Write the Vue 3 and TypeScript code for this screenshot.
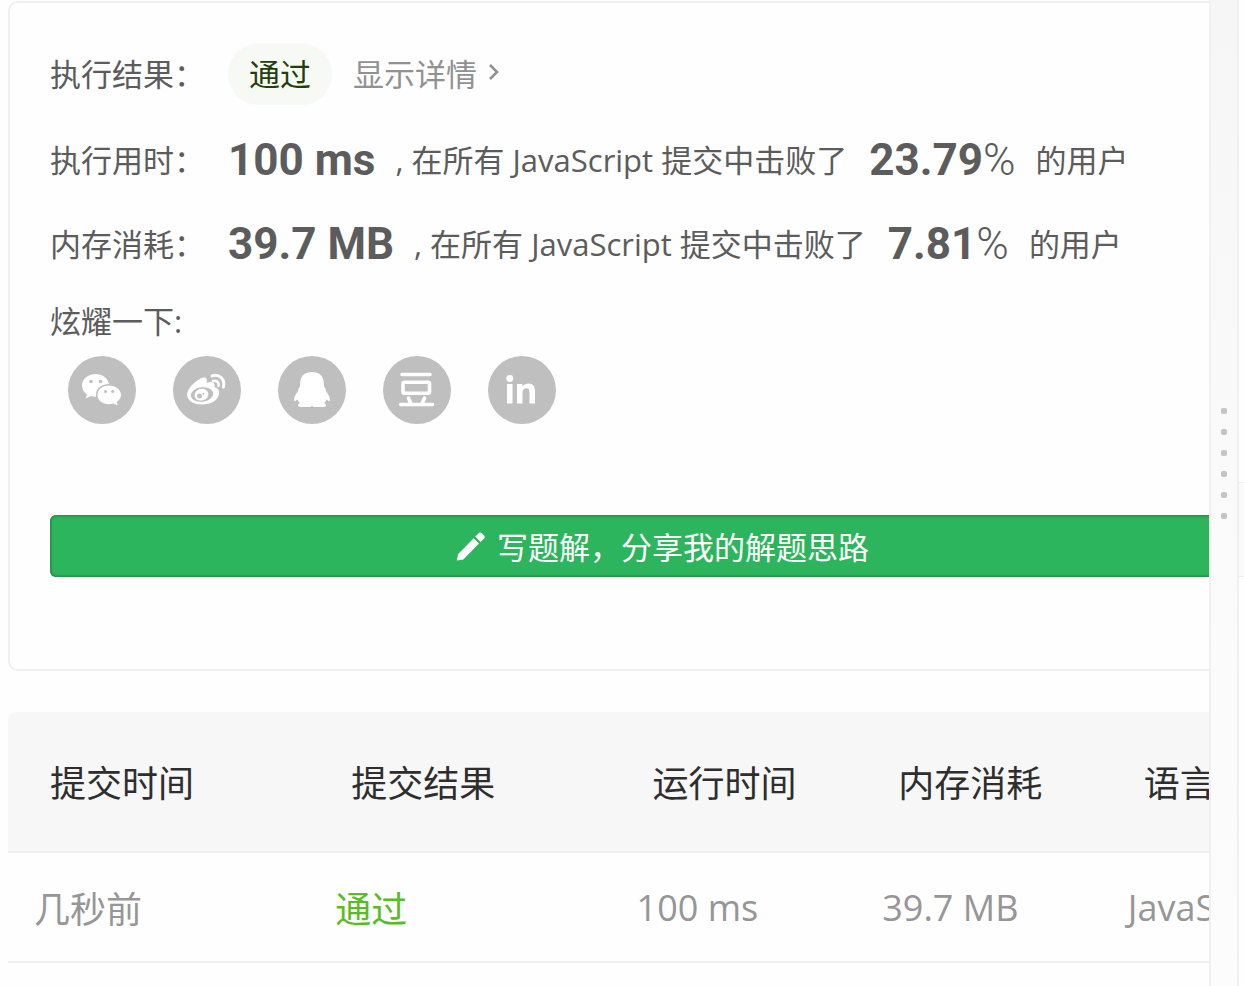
<script setup lang="ts">
interface Metric {
  label: string
  value: string
  percent: string
}

interface Submission {
  time: string
  result: string
  runtime: string
  memory: string
  language: string
}

const metrics: Metric[] = [
  { label: '执行用时：', value: '100 ms', percent: '23.79' },
  { label: '内存消耗：', value: '39.7 MB', percent: '7.81' },
]

const columns: string[] = ['提交时间', '提交结果', '运行时间', '内存消耗', '语言']

const submissions: Submission[] = [
  { time: '几秒前', result: '通过', runtime: '100 ms', memory: '39.7 MB', language: 'JavaScript' },
]
</script>

<template>
  <div class="workspace">
    <main class="pane">
      <div class="content">
        <section class="card">
          <div class="row status">
            <span class="label">执行结果：</span>
            <span class="pill">通过</span>
            <a class="detail" href="#">显示详情
              <svg width="12" height="18" viewBox="0 0 12 18" aria-hidden="true">
                <path d="M2 2 L9 9 L2 16" fill="none" stroke="currentColor" stroke-width="2.6" />
              </svg>
            </a>
          </div>

          <div v-for="m in metrics" :key="m.label" class="row metric">
            <span class="label">{{ m.label }}</span>
            <strong class="value">{{ m.value }}</strong>
            <span class="note">, 在所有 JavaScript 提交中击败了</span>
            <span class="rate"><strong class="value">{{ m.percent }}</strong><span class="sign">%</span></span>
            <span class="tail">的用户</span>
          </div>

          <div class="row share-title">炫耀一下:</div>
          <div class="shares">
            <button type="button" class="share" aria-label="微信">
              <svg viewBox="0 0 68 68" aria-hidden="true">
                <path fill="#fff" d="M27.500 18C20 18 14 23 14 29.500C14 33.500 16 36.500 19 38.500L17.500 42.500L23 40C24.500 40.500 26 40.700 28 40.700C27 33 33 28 41 28C39.800 22 34.200 18 27.500 18Z" />
                <path fill="#fff" d="M41 29.500C34.500 29.500 29.500 33.500 29.500 39C29.500 44.200 34.500 48.300 41 48.300C42.500 48.300 44 48 45.300 47.500L49.700 49.500L48.700 46C51.300 44.300 53 41.800 53 39C53 33.500 47.500 29.500 41 29.500Z" />
                <g fill="#bfbfbf">
                  <circle cx="23" cy="25.500" r="1.800" /><circle cx="32.500" cy="25.500" r="1.800" />
                  <circle cx="37.500" cy="35.500" r="1.500" /><circle cx="44.700" cy="35.500" r="1.500" />
                </g>
              </svg>
            </button>
            <button type="button" class="share" aria-label="微博">
              <svg viewBox="0 0 68 68" aria-hidden="true">
                <path fill="#fff" d="M27 23C32 20 35 22 33.500 27C38 25 42.500 26 41.500 31C45 32 46.500 34.500 46 38C45 44.500 37.500 48.500 29 48.500C20.500 48.500 14 44.500 14 38.500C14 33 21 26 27 23Z" />
                <ellipse cx="29" cy="38.500" rx="11.200" ry="7.300" fill="#bfbfbf" transform="rotate(-6 29 38.500)" />
                <ellipse cx="28.500" cy="38.700" rx="7" ry="5.800" fill="#fff" transform="rotate(-15 28.500 38.700)" />
                <circle cx="26.500" cy="40" r="2.500" fill="#bfbfbf" />
                <circle cx="30.300" cy="37.700" r="1" fill="#bfbfbf" />
                <path d="M39 20C46 17.500 52.500 23 50.500 31" fill="none" stroke="#fff" stroke-width="3" stroke-linecap="round" />
                <path d="M40 25C43.500 24 46.500 26.500 45.500 30" fill="none" stroke="#fff" stroke-width="2.400" stroke-linecap="round" />
              </svg>
            </button>
            <button type="button" class="share" aria-label="QQ">
              <svg viewBox="0 0 68 68" aria-hidden="true">
                <path fill="#fff" d="M34 16C27 16 22.500 20 22.300 26L21.800 31C20.500 32 20 33.500 20.300 35C17.500 38.500 15.500 41.500 16.200 45C17 45.300 18.300 44.500 19.500 43.500C20 45 20.800 46.200 22 47C19.500 48 19.300 50.700 22 51L32 51L34 50L36 51L46 51C48.700 50.700 48.500 48 46 47C47.200 46.200 48 45 48.500 43.500C49.700 44.500 51 45.300 51.800 45C52.500 41.500 50.500 38.500 47.700 35C48 33.500 47.500 32 46.200 31L45.700 26C45.500 20 41 16 34 16Z" />
              </svg>
            </button>
            <button type="button" class="share" aria-label="豆瓣">
              <svg viewBox="0 0 68 68" aria-hidden="true">
                <g fill="none" stroke="#fff" stroke-width="3.600" stroke-linecap="round">
                  <path d="M19 18.500H47M17.500 48.500H49.500M25.500 42L28 48M41.500 42L39 48" />
                  <rect x="20" y="26.300" width="26.500" height="11" rx="1.500" />
                </g>
              </svg>
            </button>
            <button type="button" class="share" aria-label="LinkedIn">
              <svg viewBox="0 0 68 68" aria-hidden="true">
                <circle cx="21.800" cy="22.500" r="3.400" fill="#fff" />
                <rect x="19" y="28" width="5.500" height="19.500" fill="#fff" />
                <path fill="#fff" d="M29 28H34.500V30.500C36 28.500 38 27.500 40.500 27.500C45 27.500 47 30.500 47 35V47.500H41.500V36.500C41.500 33.800 40.500 32.300 38.500 32.300C36 32.300 34.500 34 34.500 36.700V47.500H29Z" />
              </svg>
            </button>
          </div>

          <button type="button" class="write">
            <svg width="28" height="30" viewBox="0 0 28 30" aria-hidden="true">
              <path fill="#fff" d="M0 29.500L1 23.200L16.700 7.200L22 12.500L6.300 28.500ZM18.300 5.600L22 1.800Q23.300 1 24.500 2L27.300 4.800Q28.200 6 27.300 7.200L23.600 10.900Z" />
            </svg>
            <span class="write-text">写题解，分享我的解题思路</span>
          </button>
        </section>

        <table class="history">
          <colgroup>
            <col class="wide" /><col class="wide" /><col class="mid" /><col class="mid" /><col />
          </colgroup>
          <thead>
            <tr><th v-for="c in columns" :key="c" scope="col">{{ c }}</th></tr>
          </thead>
          <tbody>
            <tr v-for="s in submissions" :key="s.time">
              <td>{{ s.time }}</td>
              <td><a class="passed" href="#">{{ s.result }}</a></td>
              <td>{{ s.runtime }}</td>
              <td>{{ s.memory }}</td>
              <td>{{ s.language }}</td>
            </tr>
          </tbody>
        </table>
      </div>
    </main>

    <div class="splitter" role="separator" aria-orientation="vertical">
      <i v-for="n in 6" :key="n" class="dot"></i>
    </div>
    <aside class="side"><div class="side-box"></div></aside>
  </div>
</template>

<style>
body {
  margin: 0;
  background: #fefefe;
}
</style>

<style scoped>
.workspace {
  display: flex;
  height: 100vh;
  overflow: hidden;
  color: #5c5c5c;
  font-family: "Open Sans", "Noto Sans CJK SC", sans-serif;
  font-size: 31px;
  font-weight: 400;
}
.pane {
  flex: 1;
  min-width: 0;
  overflow: hidden;
  padding: 1px 0 0 8px;
}
/* The content is wider than the pane and runs under the splitter. */
.content {
  margin-right: -109px;
}
.card {
  border: 2px solid #f0f0f0;
  border-radius: 10px;
  padding: 40px 40px 92px;
}
.row {
  display: flex;
  align-items: center;
  white-space: nowrap;
}
.label,
.detail,
.note,
.tail,
.share-title {
  padding-bottom: 4px;
}
.label {
  width: 178px;
}
.status {
  height: 62px;
  margin-bottom: 13px;
}
.pill {
  padding: 0 21px;
  border-radius: 31px;
  background: #f7faf4;
  color: #1f3f0c;
  line-height: 62px;
}
.detail {
  display: flex;
  align-items: center;
  gap: 11px;
  margin-left: 21px;
  color: #919191;
  text-decoration: none;
}
.metric {
  height: 84px;
}
.value {
  font-family: Roboto, sans-serif;
  font-size: 44px;
  font-weight: 700;
}
.note {
  margin: 0 22px 0 20px;
}
.rate {
  display: flex;
  align-items: center;
  margin-right: 20px;
}
.sign {
  font-family: Roboto, sans-serif;
  font-size: 44px;
  font-weight: 300;
}
.share-title {
  height: 66px;
}
.shares {
  display: flex;
  gap: 37px;
  margin-left: 18px;
}
.share {
  width: 68px;
  height: 68px;
  padding: 0;
  border: 0;
  border-radius: 50%;
  background: #bfbfbf;
}
.share svg {
  display: block;
}
.write {
  display: flex;
  align-items: center;
  justify-content: center;
  gap: 12px;
  width: 100%;
  height: 62px;
  margin-top: 91px;
  padding: 0;
  border: 0;
  border-radius: 6px;
  background: #2db55d;
  box-shadow: inset 0 0 3px 1px #25813f;
  color: #fff;
  font: inherit;
}
.write-text {
  padding-bottom: 2px;
}
.history {
  width: 100%;
  margin-top: 41px;
  border-collapse: separate;
  border-spacing: 0;
  table-layout: fixed;
  font-size: 36px;
}
.wide {
  width: 23%;
}
.mid {
  width: 18.75%;
}
th {
  height: 139px;
  padding: 0 0 0 42px;
  border-bottom: 2px solid #efefef;
  background: #f7f7f7;
  color: #2e2e2e;
  font-weight: 400;
  text-align: left;
  white-space: nowrap;
}
th:first-child {
  border-top-left-radius: 8px;
}
td {
  height: 108px;
  padding: 0 0 0 26px;
  border-bottom: 2px solid #f0f0f0;
  color: #969696;
}
.passed {
  color: #5abb28;
  text-decoration: none;
}
.splitter {
  display: flex;
  flex-direction: column;
  align-items: center;
  justify-content: center;
  gap: 15px;
  box-sizing: border-box;
  width: 30px;
  padding-bottom: 60px;
  border: solid #f0f0f0;
  border-width: 0 2px;
  background: linear-gradient(#f6f6f6, #fafafa 45%, #fcfcfc);
}
.dot {
  width: 6px;
  height: 6px;
  border-radius: 2px;
  background: #c4c4c4;
}
.side {
  width: 5px;
  padding-top: 482px;
}
.side-box {
  height: 93px;
  border: solid #eee;
  border-width: 1px 0;
  background: #fafafa;
}
</style>
